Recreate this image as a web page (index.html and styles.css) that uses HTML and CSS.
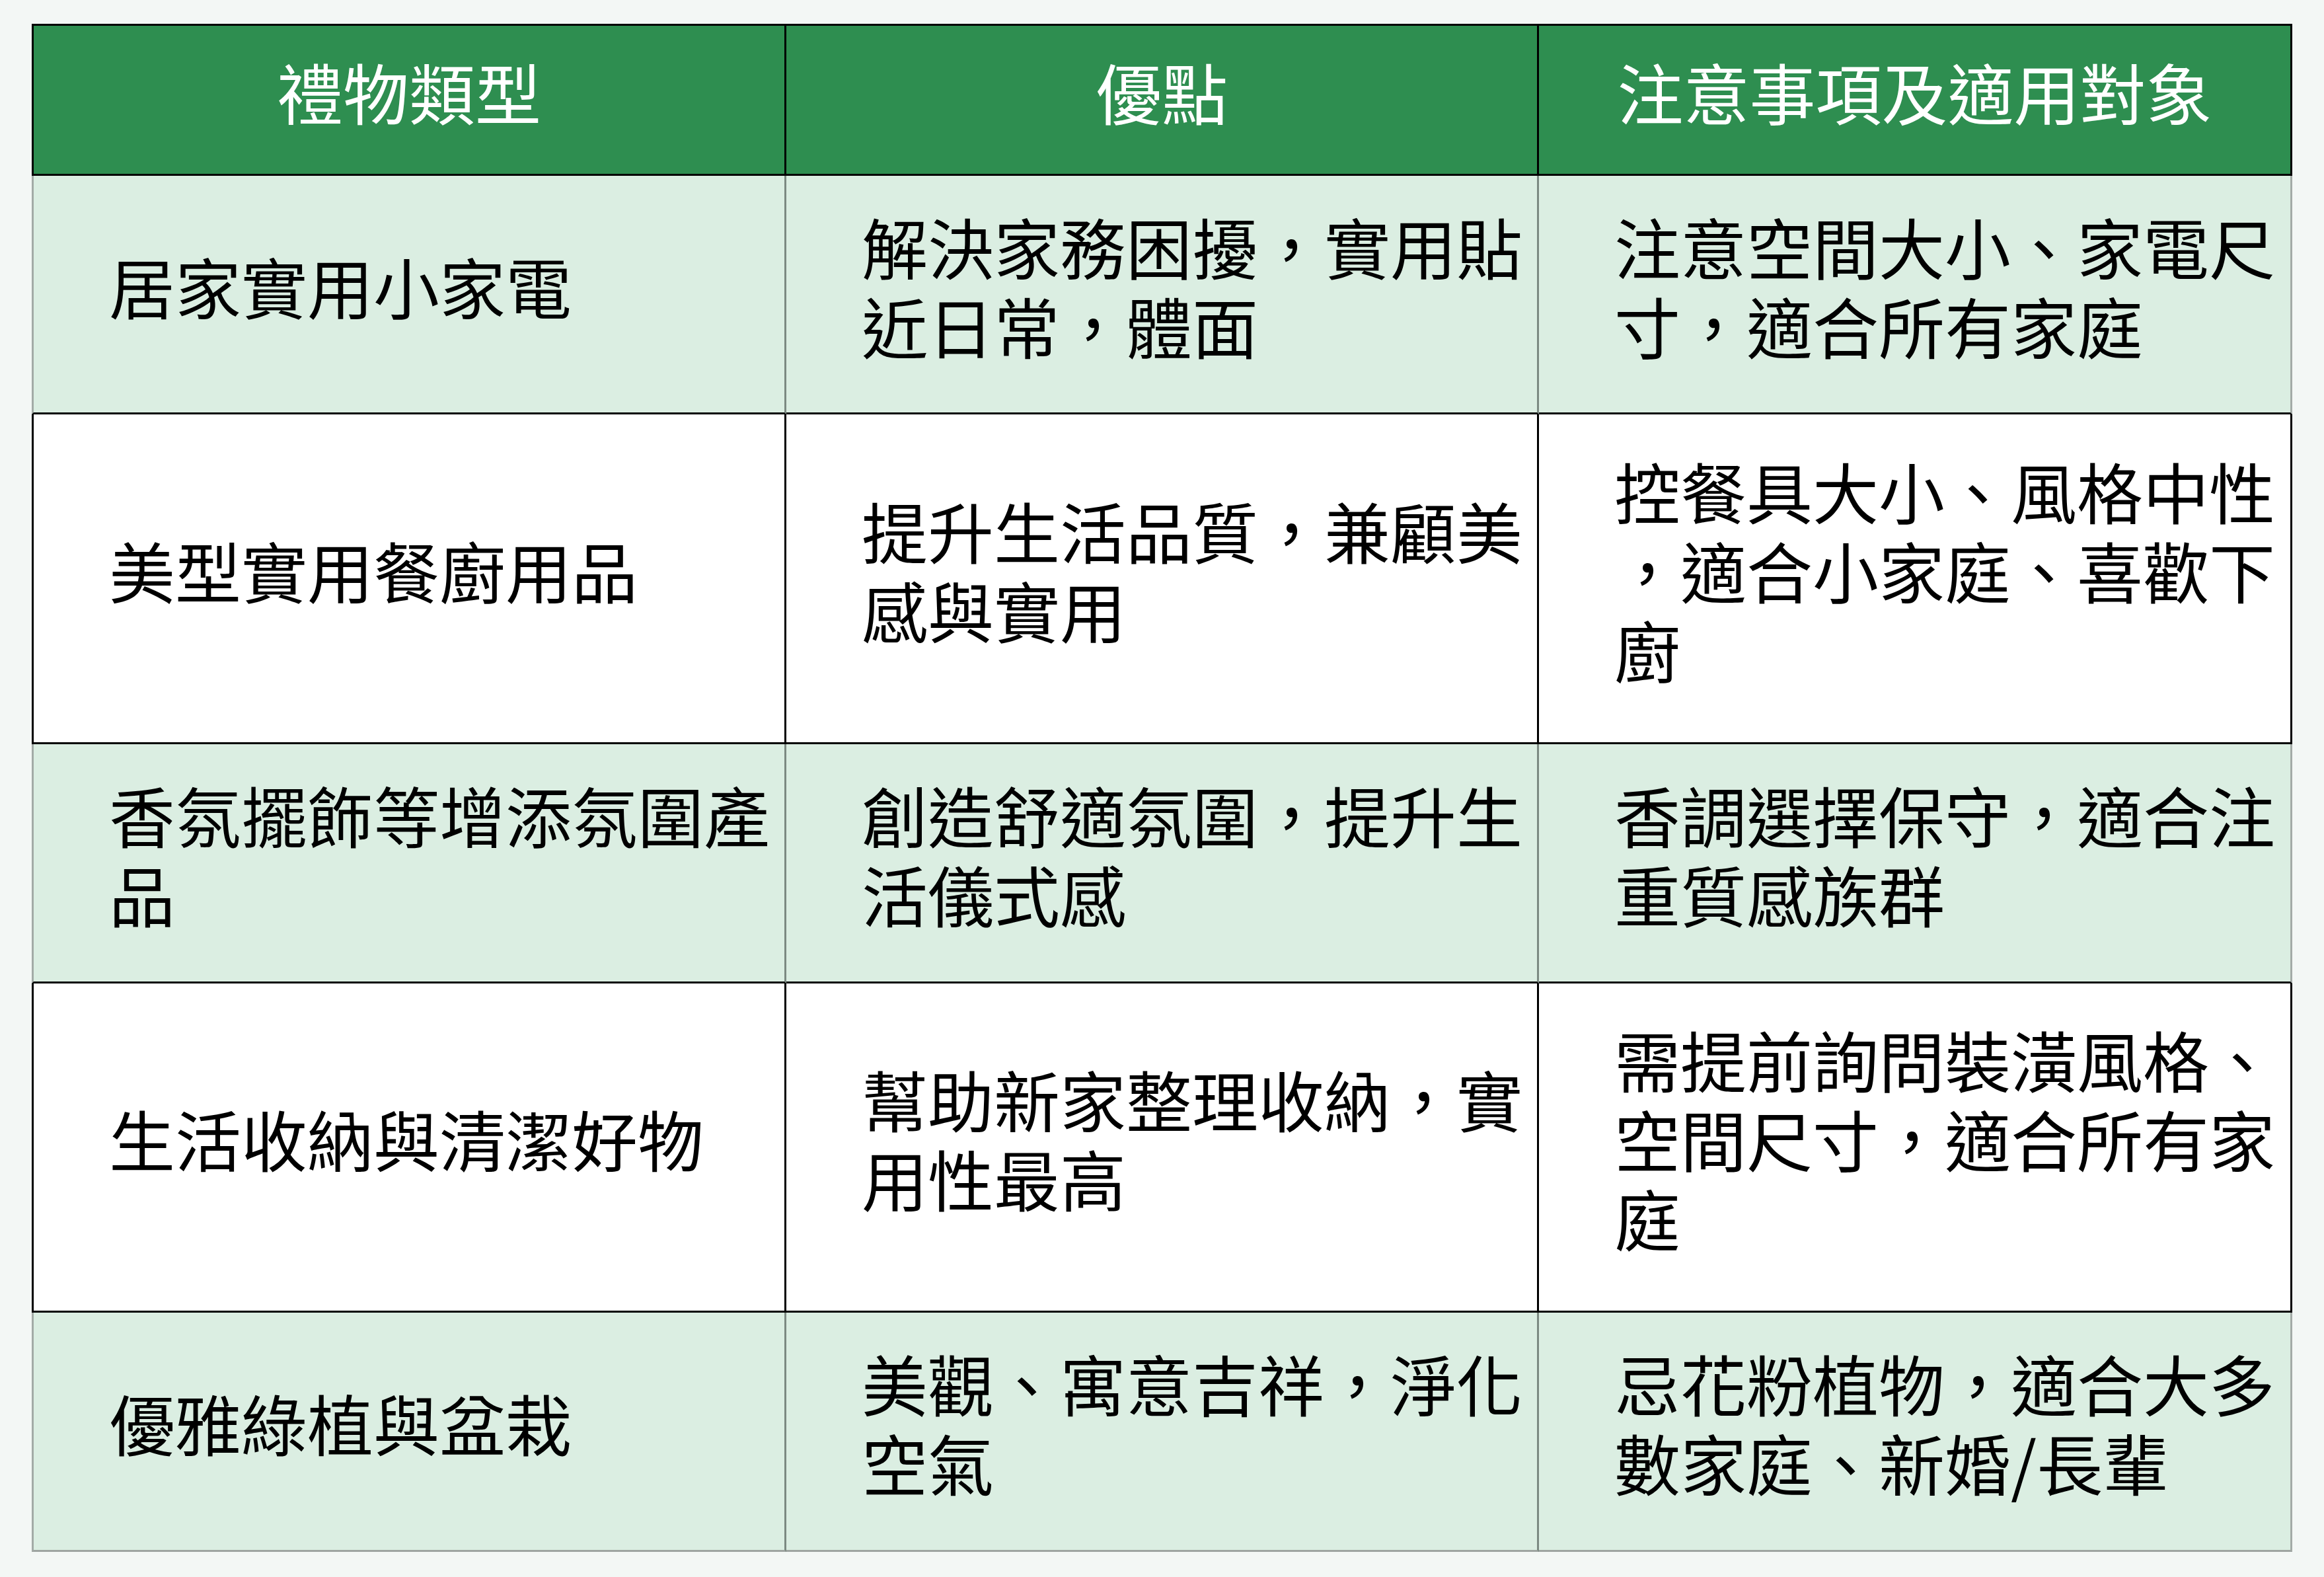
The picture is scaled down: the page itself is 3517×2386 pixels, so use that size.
FILE: index.html
```html
<!DOCTYPE html>
<html lang="zh-Hant">
<head>
<meta charset="utf-8">
<title>禮物類型</title>
<link rel="stylesheet" href="styles.css">
</head>
<body>
<div class="page">
  <div class="table">
    <div class="cell head c1"><div class="txt">禮物類型</div></div>
    <div class="cell head"><div class="txt">優點</div></div>
    <div class="cell head c3"><div class="txt">注意事項及適用對象</div></div>

    <div class="cell tint c1"><div class="txt">居家實用小家電</div></div>
    <div class="cell tint"><div class="txt">解決家務困擾，實用貼<br>近日常，體面</div></div>
    <div class="cell tint c3"><div class="txt">注意空間大小、家電尺<br>寸，適合所有家庭</div></div>

    <div class="cell c1"><div class="txt">美型實用餐廚用品</div></div>
    <div class="cell"><div class="txt">提升生活品質，兼顧美<br>感與實用</div></div>
    <div class="cell c3"><div class="txt">控餐具大小、風格中性<br>，適合小家庭、喜歡下<br>廚</div></div>

    <div class="cell tint c1"><div class="txt">香氛擺飾等增添氛圍產<br>品</div></div>
    <div class="cell tint"><div class="txt">創造舒適氛圍，提升生<br>活儀式感</div></div>
    <div class="cell tint c3"><div class="txt">香調選擇保守，適合注<br>重質感族群</div></div>

    <div class="cell c1"><div class="txt">生活收納與清潔好物</div></div>
    <div class="cell"><div class="txt">幫助新家整理收納，實<br>用性最高</div></div>
    <div class="cell c3"><div class="txt">需提前詢問裝潢風格、<br>空間尺寸，適合所有家<br>庭</div></div>

    <div class="cell tint last c1"><div class="txt">優雅綠植與盆栽</div></div>
    <div class="cell tint last"><div class="txt">美觀、寓意吉祥，淨化<br>空氣</div></div>
    <div class="cell tint last c3"><div class="txt">忌花粉植物，適合大多<br>數家庭、新婚/長輩</div></div>
  </div>
</div>
</body>
</html>
```

FILE: styles.css
```css
html, body {
  margin: 0;
  padding: 0;
  background: #f3f7f5;
}

body {
  font-family: "Noto Sans CJK TC", "Noto Sans CJK SC", sans-serif;
}

.page {
  padding: 36px 0 0 48px;
}

.table {
  display: grid;
  grid-template-columns: 1142px 1139px 1140px;
  grid-template-rows: 230px 361px 499px 362px 498px 362px;
  width: 3421px;
}

.cell {
  box-sizing: border-box;
  display: flex;
  align-items: center;
  padding: 0 0 27px 114px;
  border-right: 3px solid #000;
  border-bottom: 3px solid #000;
  background: #ffffff;
  color: #000;
  font-size: 100px;
  line-height: 120px;
  white-space: nowrap;
  overflow: hidden;
}

.cell.c1 {
  border-left: 3px solid #000;
}

.head {
  background: #2e8e50;
  color: #ffffff;
  border-top: 3px solid #000;
  justify-content: center;
  padding-left: 0;
}

.tint {
  background: #dbeee2;
  border-right-color: #7c8a82;
}

.tint.c1 {
  border-left-color: #a3aba7;
}

.tint.c3 {
  border-right-color: #a3aba7;
}

.last {
  border-bottom-color: #9ea5a1;
}
```
